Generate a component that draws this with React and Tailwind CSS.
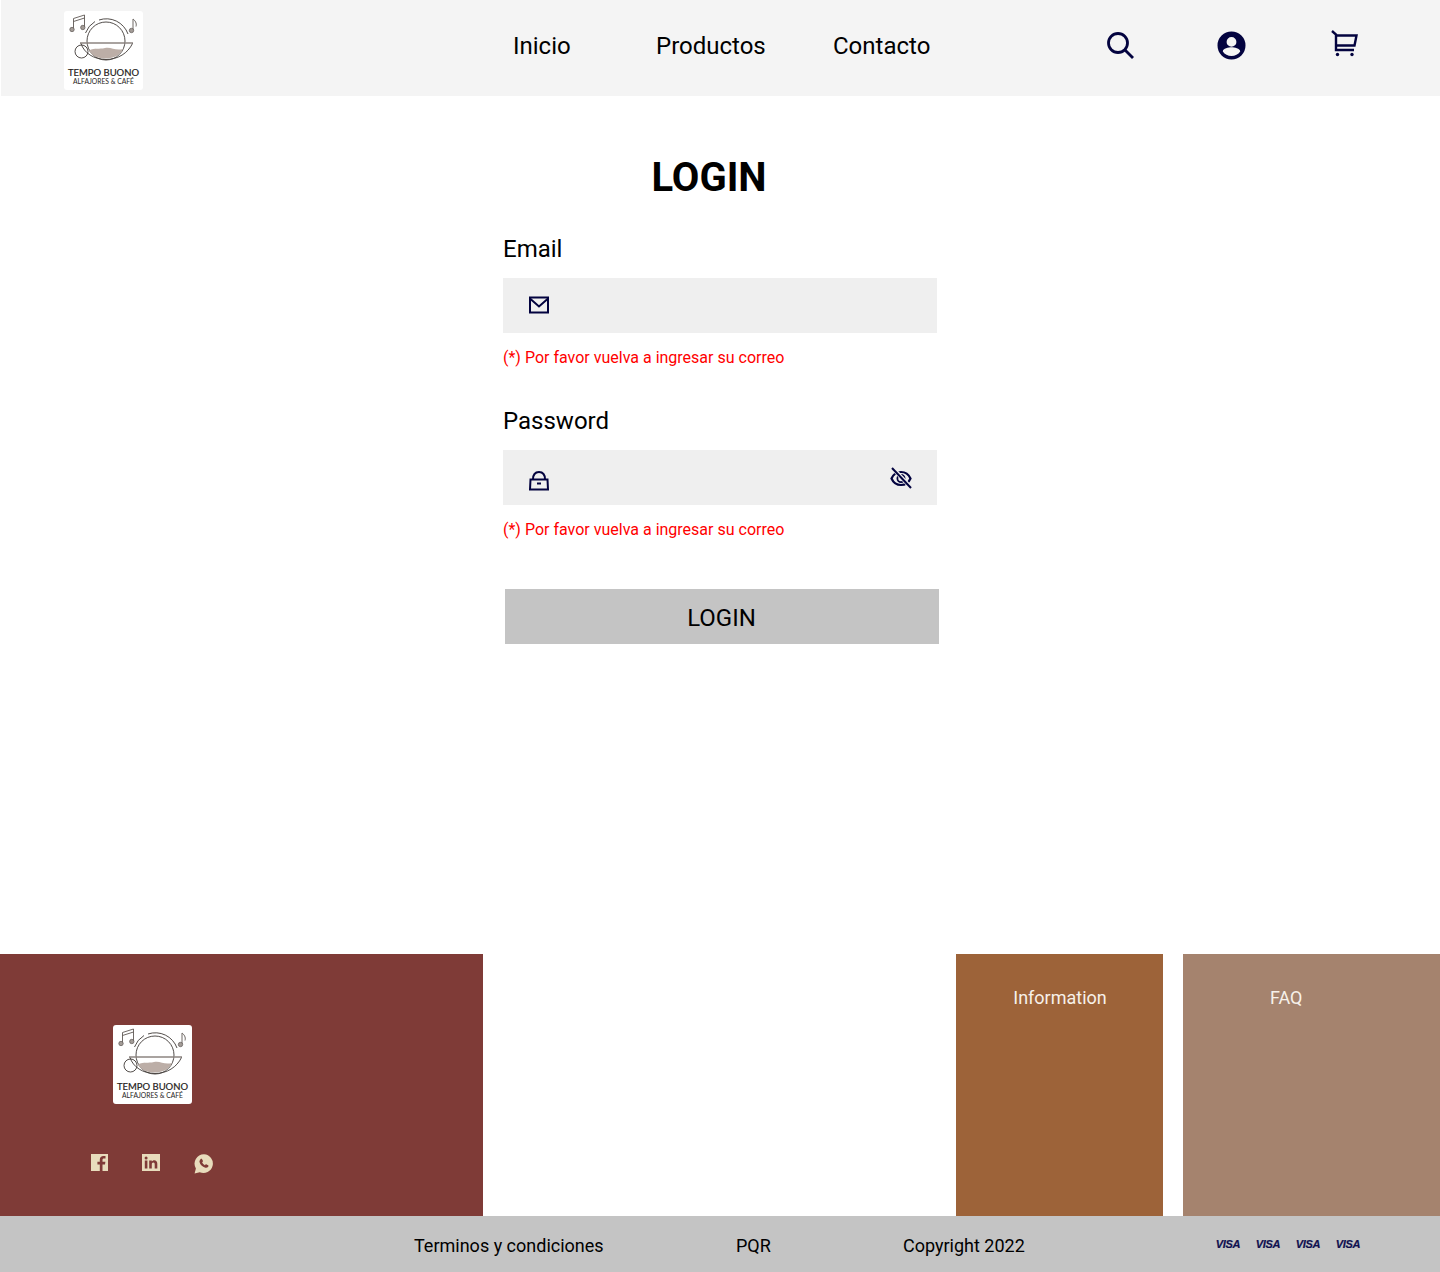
const navy = '#03033f';
const cream = '#e8dcbc';

function Logo({ className }) {
  return (
    <div className={`w-[79px] h-[79px] bg-white rounded-[3px] shrink-0 ${className}`}>
      <svg viewBox="0 0 79 79" width="79" height="79" fill="none">
        {/* notes */}
        <g stroke="#5f5854" strokeWidth="0.9">
          <path d="M9.5 18V7.5L20.5 4V16" />
          <path d="M9.5 10.5L20.5 7" />
          <path d="M69 19V8C71 9.5 73 12 72 15.5" />
        </g>
        <circle cx="8" cy="18.5" r="2.2" fill="#a39c97" stroke="#5f5854" strokeWidth="0.7" />
        <circle cx="18.8" cy="16.5" r="2.2" fill="#a39c97" stroke="#5f5854" strokeWidth="0.7" />
        <circle cx="67.5" cy="19.5" r="2.2" fill="#a39c97" stroke="#5f5854" strokeWidth="0.7" />
        {/* cup */}
        <path d="M21.5 22A23 23 0 0 1 31 10.5M35 9A23 23 0 0 1 64 23" stroke="#3f3a37" strokeWidth="0.9" />
        <circle cx="42" cy="30" r="19" stroke="#3f3a37" strokeWidth="0.9" />
        <path d="M16 32H69" stroke="#8c8580" strokeWidth="1.3" />
        <path d="M25 39.5C31 36.5 35 38.5 41 37C47 35.5 51 40 59 38C56 44 50 47.5 42 47.5C34 47.5 28 45 25 39.5Z" fill="#bcaea7" />
        <path d="M17 32.5C20 42 30 48.5 42 48.5C54 48.5 64 42 68.5 32.5" stroke="#3f3a37" strokeWidth="0.9" />
        <circle cx="17.5" cy="40.5" r="6.5" stroke="#3f3a37" strokeWidth="0.9" />
        <text x="4" y="64.5" textLength="71" lengthAdjust="spacingAndGlyphs" fontFamily="Lato, sans-serif" fontSize="9.7" stroke="#1f1c1a" strokeWidth="0.2" fill="#1f1c1a">TEMPO BUONO</text>
        <text x="9" y="73.3" textLength="61" lengthAdjust="spacingAndGlyphs" fontFamily="Lato, sans-serif" fontSize="7" fill="#1f1c1a">ALFAJORES &amp; CAFÉ</text>
      </svg>
    </div>
  );
}

function Field({ label, icon, right }) {
  return (
    <div className="w-[434px]">
      <label className="block text-2xl leading-7 text-black">{label}</label>
      <div className="h-[55px] mt-[15px] bg-[#efefef] flex items-center justify-between pl-[26px] pr-[25px]">
        {icon}
        {right}
      </div>
      <p className="mt-[15px] text-base leading-5 text-[#ff0000]">(*) Por favor vuelva a ingresar su correo</p>
    </div>
  );
}

function Visa() {
  return <span className="w-10 text-center text-[11px] leading-4 font-bold italic tracking-[-0.3px] text-[#10104f] [-webkit-text-stroke:0.2px_#10104f] font-['Liberation_Sans',sans-serif]">VISA</span>;
}

export default function App() {
  return (
    <div className="w-[1440px] h-[1272px] flex flex-col overflow-hidden bg-white font-['Roboto',sans-serif]">
      {/* Header */}
      <header className="h-[96px] ml-px bg-[#f4f4f4] flex items-center shrink-0">
        <Logo className="ml-[63px] mt-[5px]" />
        <nav className="flex text-2xl leading-7 text-black -mt-[4px] ml-[370px]">
          <a className="w-[143px]">Inicio</a>
          <a className="w-[177px]">Productos</a>
          <a>Contacto</a>
        </nav>
        <div className="flex items-center ml-[177px] -mt-[6px]">
          <svg width="27" height="27" viewBox="0 0 27 27" fill="none" stroke={navy} strokeWidth="2.8">
            <circle cx="11" cy="11" r="9.5" />
            <path d="M18 18L26 26" />
          </svg>
          <svg className="ml-[83px]" width="29" height="29" viewBox="0 0 29 29">
            <path fill={navy} fillRule="evenodd" d="M14.5 0.5a14 14 0 1 0 0 28a14 14 0 0 0 0-28ZM14.5 6a4.9 4.9 0 1 1 0 9.8a4.9 4.9 0 0 1 0-9.8ZM14.5 25c-3.6 0-6.8-1.8-8.7-4.6c.1-2.8 5.8-4.1 8.7-4.1s8.6 1.3 8.7 4.1c-1.9 2.8-5.1 4.6-8.7 4.6Z" />
          </svg>
          <svg className="ml-[85px] -mt-[2px]" width="27" height="28" viewBox="0 0 27 28" fill="none" stroke={navy} strokeWidth="2.4">
            <path d="M1 1L5 4.5V20H23" />
            <path d="M5 5.5H25.5L23.5 15.5H5" />
            <circle cx="6.5" cy="24.5" r="1.7" fill={navy} stroke="none" />
            <circle cx="21" cy="24.5" r="1.7" fill={navy} stroke="none" />
          </svg>
        </div>
      </header>

      {/* Login form */}
      <main className="h-[858px] shrink-0 pl-[503px] pt-[57px]">
        <h1 className="w-[412px] text-center text-[40px] leading-[50px] font-bold text-black">LOGIN</h1>
        <div className="mt-[32px] flex flex-col gap-[39px]">
          <Field
            label="Email"
            icon={
              <svg className="-mt-[1px]" width="20" height="18" viewBox="0 0 20 18" fill="none" stroke={navy} strokeWidth="2">
                <rect x="1" y="1.5" width="18" height="15" />
                <path d="M1.5 3L10 10.5L18.5 3" />
              </svg>
            }
          />
          <Field
            label="Password"
            icon={
              <svg className="mt-[5px]" width="20" height="21" viewBox="0 0 20 21" fill="none" stroke={navy} strokeWidth="2">
                <path d="M1.5 9.5H18.5L19 19.5H1L1.5 9.5Z" />
                <path d="M4 9.5C4 4.5 6.5 2 10 2C13.5 2 16 4.5 16 9.5" />
                <path d="M8 13.5H12" />
              </svg>
            }
            right={
              <svg width="22" height="22" viewBox="0 0 22 22" fill="none" stroke={navy} strokeWidth="2">
                <path d="M1.5 11.5C3.5 7 7 5 11 5C15 5 18.5 7 20.5 11.5C18.5 16 15 18 11 18C7 18 3.5 16 1.5 11.5Z" strokeWidth="2.2" />
                <circle cx="11" cy="11.5" r="3.6" strokeWidth="1.8" />
                <path d="M3 1.5L21 20.5" stroke="#efefef" strokeWidth="4" />
                <path d="M2 1L21 21" strokeWidth="2" />
              </svg>
            }
          />
        </div>
        <button className="mt-[49px] ml-[2px] w-[434px] h-[55px] pt-[2px] pr-[1px] bg-[#c4c4c4] text-2xl text-black block">LOGIN</button>
      </main>

      {/* Footer */}
      <footer className="h-[262px] shrink-0 flex">
        <div className="w-[483px] bg-[#7f3b37] pt-[71px]">
          <Logo className="ml-[113px]" />
          <div className="flex items-start mt-[50px] ml-[91px] gap-[34px]">
            <svg width="17" height="17" viewBox="0 0 17 17">
              <path fill={cream} d="M0 0H17V17H11.5V10.5H14L14.4 7.7H11.5V6C11.5 5.2 11.8 4.6 13 4.6H14.5V2.1C14.2 2.1 13.4 2 12.5 2C10.3 2 8.8 3.3 8.8 5.7V7.7H6.4V10.5H8.8V17H0Z" />
            </svg>
            <svg width="18" height="17" viewBox="0 0 18 17">
              <path fill={cream} fillRule="evenodd" d="M0 0H18V17H0ZM2.8 6.5V14.5H5.4V6.5ZM4.1 2.5A1.5 1.5 0 1 0 4.1 5.5A1.5 1.5 0 0 0 4.1 2.5ZM7.2 6.5V14.5H9.8V10.4C9.8 9.2 10.3 8.5 11.3 8.5C12.3 8.5 12.7 9.2 12.7 10.4V14.5H15.3V9.8C15.3 7.4 14.1 6.2 12.3 6.2C11.1 6.2 10.3 6.8 9.8 7.6V6.5Z" />
            </svg>
            <svg width="20" height="20" viewBox="0 0 20 20">
              <path fill={cream} d="M10 0.2A9.4 9.4 0 0 0 1.9 14.4L0.6 19.4L5.7 18.2A9.4 9.4 0 1 0 10 0.2Z" />
              <path fill="#7f3b37" d="M6.5 5.2c.5-.5 1.3-.5 1.6 0l.8 1.6c.2.4 0 .8-.3 1.1l-.5.5c.6 1.2 1.5 2.1 2.8 2.8l.6-.6c.3-.3.7-.4 1.1-.2l1.5.8c.5.3.5 1 .1 1.5-.7.9-1.7 1.3-2.8 1-3.2-.9-5.2-2.9-5.9-5.6-.2-1 .2-2 1-2.9z" />
            </svg>
          </div>
        </div>
        <div className="w-[473px]" />
        <div className="w-[207px] bg-[#9d6339] pt-[33px] pl-[1px] text-center text-lg leading-[22px] text-[#f7f1ea]">Information</div>
        <div className="w-[20px]" />
        <div className="flex-1 bg-[#a5836e] pt-[33px] pl-[87px] text-lg leading-[22px] text-[#f7f1ea]">FAQ</div>
      </footer>

      {/* Bottom bar */}
      <div className="h-[56px] shrink-0 bg-[#c4c4c4] flex items-center text-lg leading-[22px] text-black">
        <span className="ml-[414px] mt-[4px] w-[322px]">Terminos y condiciones</span>
        <span className="mt-[4px] w-[167px]">PQR</span>
        <span className="mt-[4px] w-[305px]">Copyright 2022</span>
        <div className="flex -mt-[1px]">
          <Visa />
          <Visa />
          <Visa />
          <Visa />
        </div>
      </div>
    </div>
  );
}
